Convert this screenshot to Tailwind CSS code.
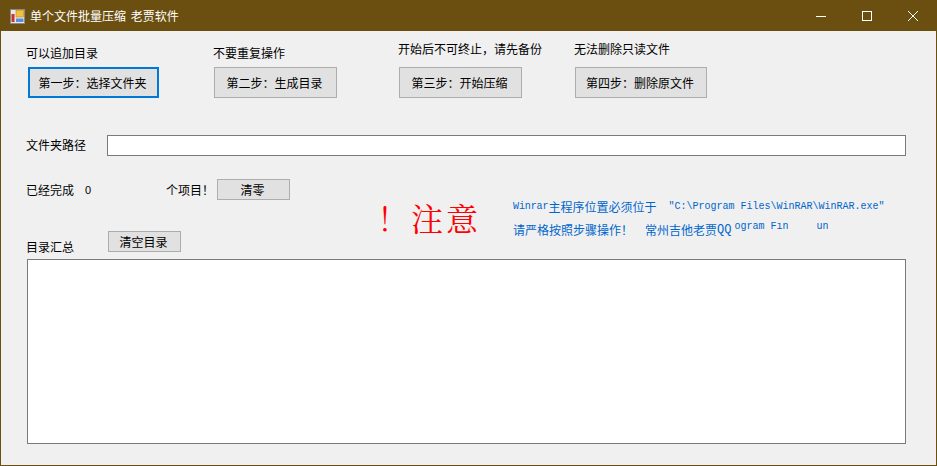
<!DOCTYPE html>
<html lang="zh-CN">
<head>
  <meta charset="UTF-8" />
  <title>单个文件批量压缩 老贾软件</title>
  <script src="https://cdn.jsdelivr.net/npm/@tailwindcss/browser@4"></script>
</head>
<body class="bg-[#f0f0f0]">
  <div class="flex flex-col w-[937px] h-[466px] overflow-hidden border border-[#6b4f10] bg-[#f0f0f0] text-[12px] leading-[16px] text-black font-['Noto_Sans_CJK_SC','Noto_Sans',sans-serif]">
    <!-- Title bar -->
    <div class="flex items-center h-[30px] shrink-0 bg-[#6b4f10] text-white">
      <svg class="ml-[9px] w-[15px] h-[15px]" viewBox="0 0 15 15">
        <rect x="0.5" y="0.5" width="14" height="14" fill="#e8e8e8" stroke="#8a8a80" />
        <rect x="6" y="1.5" width="7.5" height="6.5" fill="#f3c23c" stroke="#b8891c" stroke-width="0.6" />
        <rect x="1.5" y="5" width="3" height="8" fill="#c8342c" />
        <rect x="6" y="9.5" width="7.5" height="3.5" fill="#5a8fd8" />
      </svg>
      <span class="ml-[5px] -mt-[1px] [word-spacing:2px]">单个文件批量压缩 老贾软件</span>
      <div class="flex items-center ml-auto">
        <svg class="w-[46px] h-[30px]" viewBox="0 0 46 30"><path d="M18 15.5h10" stroke="#fff" fill="none" /></svg>
        <svg class="w-[46px] h-[30px]" viewBox="0 0 46 30"><rect x="18.5" y="10.5" width="9" height="9" stroke="#fff" fill="none" /></svg>
        <svg class="w-[46px] h-[30px]" viewBox="0 0 46 30"><path d="M18 10l10 10M28 10l-10 10" stroke="#fff" fill="none" /></svg>
      </div>
    </div>

    <!-- Steps -->
    <div class="flex items-end pl-[25px] pt-[10px] h-[67px] shrink-0">
      <div class="w-[186px]">
        <div class="mb-[6px]">可以追加目录</div>
        <button class="flex items-center justify-center ml-[2px] pr-[2px] w-[131px] h-[31px] bg-[#e1e1e1] border-2 border-[#0078d7]">第一步：选择文件夹</button>
      </div>
      <div class="w-[185px]">
        <div class="mb-[6px] ml-[1px]">不要重复操作</div>
        <button class="flex items-center justify-center ml-[2px] pr-[2px] w-[123px] h-[31px] bg-[#e1e1e1] border border-[#adadad]">第二步：生成目录</button>
      </div>
      <div class="w-[176px]">
        <div class="mb-[10px] ml-[1px]">开始后不可终止，请先备份</div>
        <button class="flex items-center justify-center ml-[2px] pr-[2px] w-[123px] h-[31px] bg-[#e1e1e1] border border-[#adadad]">第三步：开始压缩</button>
      </div>
      <div>
        <div class="mb-[10px] ml-[1px]">无法删除只读文件</div>
        <button class="flex items-center justify-center ml-[2px] pr-[2px] w-[132px] h-[31px] bg-[#e1e1e1] border border-[#adadad]">第四步：删除原文件</button>
      </div>
    </div>

    <!-- Folder path -->
    <div class="flex items-center pl-[25px] mt-[37px] shrink-0">
      <span class="w-[81px] -mt-[2px]">文件夹路径</span>
      <div class="w-[799px] h-[21px] bg-white border border-[#7a7a7a]"></div>
    </div>

    <!-- Counter and notice -->
    <div class="flex pl-[25px] mt-[23px] h-[80px] shrink-0">
      <div class="w-[353px]">
        <div class="flex items-center h-[21px]">
          <span class="w-[59px]">已经完成</span>
          <span class="w-[81px] text-[11px] font-['Liberation_Sans',sans-serif]">0</span>
          <span class="w-[51px]">个项目！</span>
          <button class="flex items-center justify-center pr-[2px] w-[73px] h-[21px] bg-[#e1e1e1] border border-[#adadad]">清零</button>
        </div>
        <div class="flex items-end mt-[31px]">
          <span class="w-[82px] -mb-[3px]">目录汇总</span>
          <button class="flex items-center justify-center pr-[2px] w-[73px] h-[21px] bg-[#e1e1e1] border border-[#adadad]">清空目录</button>
        </div>
      </div>
      <div class="flex items-center h-[40px] mt-[18px] w-[134px] text-[32px] leading-[40px] text-[#ff0000] font-normal font-['Noto_Serif_CJK_SC','Noto_Sans_CJK_SC',serif]">
        <span class="-ml-[4px] w-[36px] text-center">！</span><span class="tracking-[3px]">注意</span>
      </div>
      <div class="text-[#0066cc] mt-[18px]">
        <div class="flex items-center h-[20px]">
          <span class="font-['Liberation_Mono','Noto_Sans_CJK_SC',monospace] text-[10px] tracking-[-0.1px]">Winrar</span><span>主程序位置必须位于</span>
          <span class="ml-[12px] font-['Liberation_Mono','Noto_Sans_CJK_SC',monospace] text-[10px]">"C:\Program Files\WinRAR\WinRAR.exe"</span>
        </div>
        <div class="flex items-center h-[20px] mt-[3px]">
          <span>请严格按照步骤操作！</span>
          <span class="ml-[12px]">常州吉他老贾</span>
          <span class="font-['Liberation_Mono',monospace] text-[12px]">QQ</span>
          <span class="ml-[3px] -mt-[6px] h-[10px] overflow-hidden font-['Liberation_Mono',monospace] text-[10px] leading-[10px]">ogram Fin</span>
          <span class="ml-[28px] -mt-[6px] h-[10px] overflow-hidden font-['Liberation_Mono',monospace] text-[10px] leading-[10px]">un</span>
        </div>
      </div>
    </div>

    <!-- Directory list -->
    <div class="ml-[26px] w-[879px] h-[185px] shrink-0 bg-white border border-[#7a7a7a]"></div>
  </div>
</body>
</html>
